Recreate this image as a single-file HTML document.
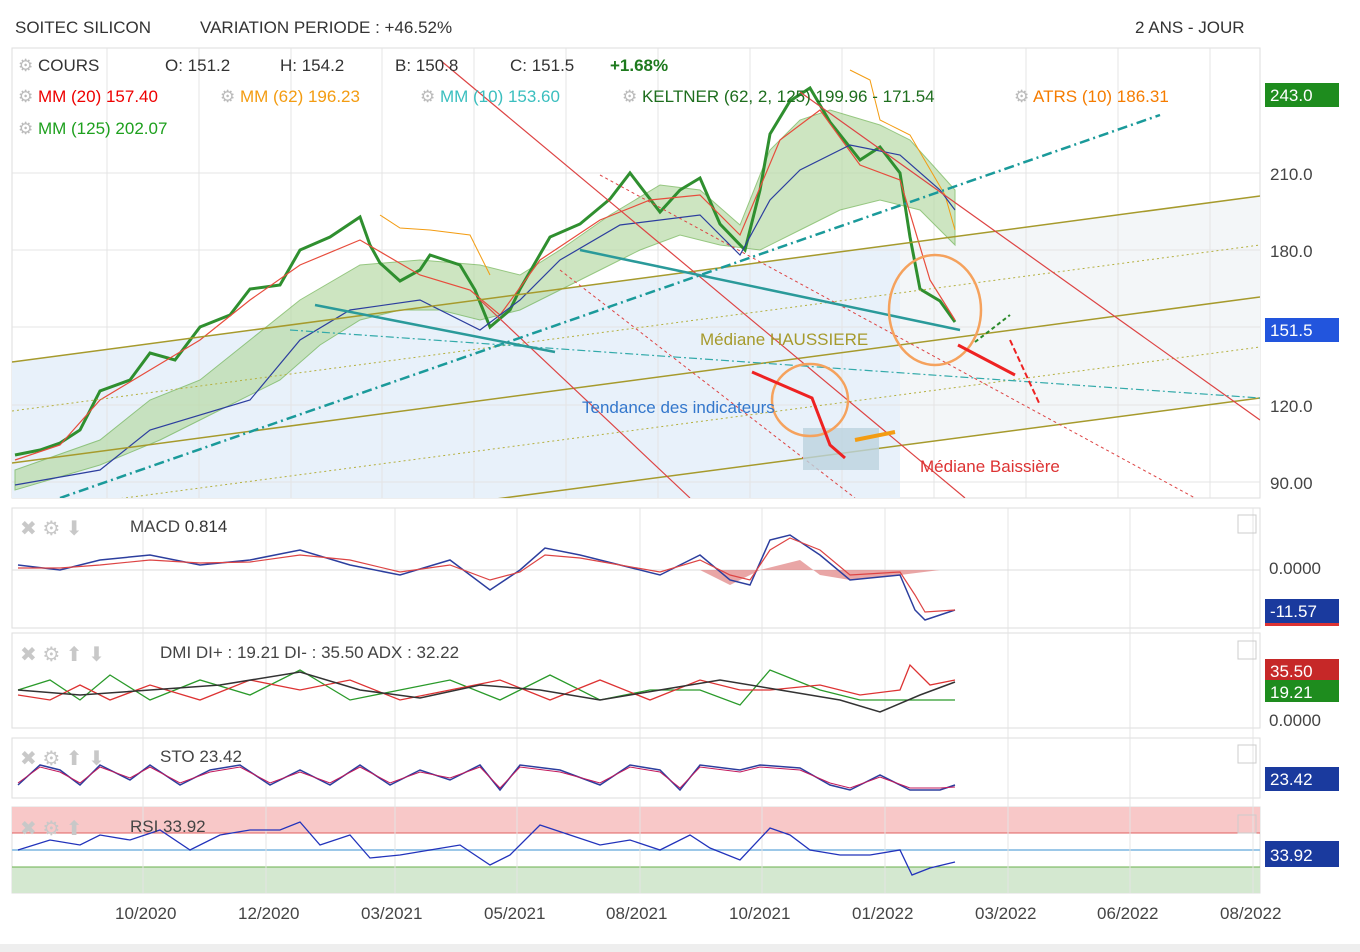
<!DOCTYPE html>
<html><head><meta charset="utf-8"><style>
body{margin:0;width:1360px;height:952px;background:#fff;font-family:"Liberation Sans",sans-serif;overflow:hidden;position:relative}
.t{position:absolute;font-size:17px;white-space:nowrap}
.g{color:#bbb}
</style></head><body>
<div class="t" style="left:15px;top:18px;color:#333">SOITEC SILICON</div>
<div class="t" style="left:200px;top:18px;color:#333">VARIATION PERIODE : +46.52%</div>
<div class="t" style="left:1135px;top:18px;color:#333">2 ANS - JOUR</div>
<svg width="1360" height="952" style="position:absolute;left:0;top:0">
<defs><clipPath id="c"><rect x="12" y="48" width="1248" height="450"/></clipPath></defs>
<rect x="0" y="944" width="1360" height="8" fill="#eee"/>
<!-- main panel -->
<rect x="12" y="48" width="1248" height="450" fill="#fff" stroke="#ddd"/>
<g clip-path="url(#c)">
<polygon points="12,362 1260,196 1260,398 12,563" fill="#fdfde8"/>
<polygon points="12,362 900,243 900,498 12,498" fill="#e8f1fa"/>
<polygon points="900,243 1260,196 1260,398 900,446" fill="#f3f6f8"/>
<g stroke="#e4e4e4"><line x1="107" y1="48" x2="107" y2="498"/><line x1="199" y1="48" x2="199" y2="498"/><line x1="291" y1="48" x2="291" y2="498"/><line x1="382" y1="48" x2="382" y2="498"/><line x1="474" y1="48" x2="474" y2="498"/><line x1="566" y1="48" x2="566" y2="498"/><line x1="658" y1="48" x2="658" y2="498"/><line x1="750" y1="48" x2="750" y2="498"/><line x1="842" y1="48" x2="842" y2="498"/><line x1="934" y1="48" x2="934" y2="498"/><line x1="1026" y1="48" x2="1026" y2="498"/><line x1="1118" y1="48" x2="1118" y2="498"/><line x1="1210" y1="48" x2="1210" y2="498"/>
<line x1="12" y1="173" x2="1260" y2="173"/><line x1="12" y1="250" x2="1260" y2="250"/><line x1="12" y1="327" x2="1260" y2="327"/><line x1="12" y1="405" x2="1260" y2="405"/><line x1="12" y1="482" x2="1260" y2="482"/></g>
<!-- keltner band -->
<polygon points="15,470 100,440 150,400 200,380 250,340 300,300 360,265 420,260 480,265 520,275 560,250 610,215 660,185 700,190 740,225 770,150 800,120 830,110 880,125 910,140 955,190 955,245 920,210 880,200 840,210 800,230 760,250 720,245 680,235 640,250 600,270 560,290 520,310 480,320 440,310 400,310 360,320 320,345 280,380 220,410 160,440 100,465 15,490" fill="#b9dba7" opacity=".7" stroke="#6ab04c"/>
<polyline points="380,215 400,228 430,230 470,235 490,275" fill="none" stroke="#f39c12"/>
<polyline points="850,70 870,80 880,120 910,135 945,195 955,230" fill="none" stroke="#f39c12"/>
<!-- price -->
<polyline points="15,455 40,450 60,443 80,430 100,391 130,380 150,353 175,360 200,327 230,315 250,289 280,285 300,250 330,237 360,217 370,245 380,263 400,281 420,270 430,255 460,265 475,290 490,327 510,310 520,289 550,237 580,224 610,199 630,173 660,212 680,190 700,178 720,224 745,250 760,190 770,134 790,101 810,88 830,122 860,160 880,147 900,173 910,237 920,289 940,301 955,322" fill="none" stroke="#2f8f2f" stroke-width="3"/>
<polyline points="15,460 60,445 100,400 150,370 200,340 250,300 300,265 360,240 420,275 470,290 500,315 540,260 600,220 650,200 700,195 740,235 780,140 820,110 860,165 900,180 930,280 955,320" fill="none" stroke="#e74c3c" stroke-width="1.2"/>
<polyline points="15,485 100,470 150,430 250,400 300,340 350,310 420,300 480,330 520,300 560,260 620,225 700,215 740,255 770,200 800,170 850,145 900,155 940,190 955,210" fill="none" stroke="#2c3e9e" stroke-width="1.2"/>
<!-- channels -->
<g stroke="#a69a2c" stroke-width="1.5"><line x1="12" y1="362" x2="1260" y2="196"/><line x1="12" y1="463" x2="1260" y2="297"/><line x1="12" y1="563" x2="1260" y2="398"/></g>
<g stroke="#b5b040" stroke-dasharray="2,3"><line x1="12" y1="411" x2="1260" y2="245"/><line x1="12" y1="513" x2="1260" y2="347"/></g>
<g stroke="#d44" stroke-width="1.2"><line x1="440" y1="60" x2="965" y2="498"/><line x1="800" y1="92" x2="1260" y2="420"/><line x1="480" y1="300" x2="690" y2="498"/></g>
<g stroke="#d44" stroke-dasharray="3,3"><line x1="600" y1="175" x2="1195" y2="498"/><line x1="560" y1="270" x2="855" y2="498"/></g>
<line x1="60" y1="498" x2="1160" y2="115" stroke="#1a9a9a" stroke-width="2.5" stroke-dasharray="10,4,2,4"/>
<line x1="290" y1="330" x2="1260" y2="398" stroke="#3aa" stroke-width="1.2" stroke-dasharray="8,3,2,3"/>
<g stroke="#2a9a9a" stroke-width="2.5"><line x1="315" y1="305" x2="555" y2="352"/><line x1="580" y1="250" x2="960" y2="330"/></g>
<rect x="803" y="428" width="76" height="42" fill="#bcd3df" opacity=".8"/>
<ellipse cx="935" cy="310" rx="46" ry="55" fill="none" stroke="#f5a25d" stroke-width="2.5"/>
<ellipse cx="810" cy="400" rx="38" ry="36" fill="none" stroke="#f5a25d" stroke-width="2.5"/>
<g stroke="#e22" stroke-width="3" fill="none"><path d="M752 372 L812 398 L830 445 L845 458"/><path d="M958 345 L1015 375"/></g>
<path d="M1010 340 L1040 405" stroke="#e22" stroke-width="2" stroke-dasharray="6,3"/>
<path d="M975 342 L1010 315" stroke="#2a8a2a" stroke-width="2" stroke-dasharray="4,3"/>
<path d="M855 440 L895 432" stroke="#f39c12" stroke-width="4"/>
</g>
<text x="700" y="345" fill="#a69a2c" font-size="17" font-family="Liberation Sans">Médiane HAUSSIERE</text>
<text x="582" y="413" fill="#3377cc" font-size="17" font-family="Liberation Sans">Tendance des indicateurs</text>
<text x="920" y="472" fill="#d33" font-size="17" font-family="Liberation Sans">Médiane Baissière</text>
<!-- right axis -->
<g font-family="Liberation Sans" font-size="17" fill="#444">
<rect x="1265" y="83" width="74" height="24" fill="#1e8c1e"/><text x="1270" y="101" fill="#fff">243.0</text>
<text x="1270" y="180">210.0</text><text x="1270" y="257">180.0</text>
<rect x="1265" y="318" width="74" height="24" fill="#2255dd"/><text x="1270" y="336" fill="#fff">151.5</text>
<text x="1270" y="412">120.0</text><text x="1270" y="489">90.00</text>
</g>
<!-- sub panels -->
<g fill="#fff" stroke="#ddd"><rect x="12" y="508" width="1248" height="120"/><rect x="12" y="633" width="1248" height="95"/><rect x="12" y="738" width="1248" height="60"/><rect x="12" y="807" width="1248" height="86"/></g>
<rect x="12" y="807" width="1248" height="26" fill="#f8c8c8"/>
<rect x="12" y="867" width="1248" height="26" fill="#d4e8d0"/>
<line x1="12" y1="833" x2="1260" y2="833" stroke="#e06060"/>
<line x1="12" y1="850" x2="1260" y2="850" stroke="#9cc8e8" stroke-width="2"/>
<line x1="12" y1="867" x2="1260" y2="867" stroke="#6ab04c"/>
<g stroke="#e4e4e4"><line x1="143" y1="508" x2="143" y2="893"/><line x1="266" y1="508" x2="266" y2="893"/><line x1="395" y1="508" x2="395" y2="893"/><line x1="517" y1="508" x2="517" y2="893"/><line x1="640" y1="508" x2="640" y2="893"/><line x1="762" y1="508" x2="762" y2="893"/><line x1="885" y1="508" x2="885" y2="893"/><line x1="1008" y1="508" x2="1008" y2="893"/><line x1="1130" y1="508" x2="1130" y2="893"/><line x1="1253" y1="508" x2="1253" y2="893"/></g>
<line x1="12" y1="570" x2="1260" y2="570" stroke="#ddd"/>
<!-- macd -->
<polygon points="700,570 730,585 760,570 800,560 820,575 850,580 900,575 940,570" fill="#e08080" opacity=".7"/>
<polyline points="18,565 60,570 100,560 150,555 200,565 250,560 300,550 350,565 400,575 450,560 490,590 520,570 545,548 580,555 620,565 660,575 700,555 730,580 750,585 770,540 790,535 820,555 850,580 900,575 915,610 925,620 955,610" fill="none" stroke="#2c3e9e" stroke-width="1.5"/>
<polyline points="18,568 60,568 100,565 150,560 200,563 250,562 300,555 350,560 400,572 450,565 490,580 520,572 545,555 580,558 620,565 660,572 700,560 730,575 750,580 770,550 790,538 820,550 850,575 900,572 915,595 925,612 955,610" fill="none" stroke="#d44" stroke-width="1.2"/>
<!-- dmi -->
<polyline points="18,690 50,680 80,700 110,675 150,700 200,680 250,695 300,670 350,700 400,690 450,680 500,700 550,675 600,700 650,690 700,690 740,705 770,670 820,690 860,700 900,700 920,700 955,700" fill="none" stroke="#2a9a2a" stroke-width="1.3"/>
<polyline points="18,695 50,700 80,685 110,700 150,685 200,700 250,680 300,690 350,680 400,700 450,690 500,680 550,700 600,680 650,700 700,680 740,690 770,690 820,685 860,695 900,690 910,665 930,685 955,680" fill="none" stroke="#d33" stroke-width="1.3"/>
<polyline points="18,690 80,695 150,690 220,685 300,672 360,690 420,698 480,685 540,690 600,700 660,690 720,680 780,690 840,700 880,712 920,695 955,682" fill="none" stroke="#333" stroke-width="1.5"/>
<!-- sto -->
<polyline points="18,785 40,765 60,770 80,785 100,765 130,780 150,765 180,785 210,770 240,765 270,785 300,770 330,785 360,765 390,785 420,770 450,780 480,765 500,790 520,765 560,770 600,785 630,765 660,770 680,790 700,765 740,770 760,765 800,768 830,785 850,790 880,775 910,790 940,790 955,785" fill="none" stroke="#2c3e9e" stroke-width="1.5"/>
<polyline points="18,783 40,767 60,772 80,783 100,767 130,778 150,767 180,783 210,772 240,767 270,783 300,772 330,783 360,767 390,783 420,772 450,778 480,767 500,788 520,767 560,772 600,783 630,767 660,772 680,788 700,767 740,772 760,767 800,770 830,783 850,788 880,777 910,788 940,788 955,787" fill="none" stroke="#c2185b" stroke-width="1"/>
<!-- rsi -->
<polyline points="18,850 50,840 80,845 100,835 130,840 160,830 190,850 220,835 250,830 280,830 300,822 320,845 350,835 370,858 400,855 430,850 460,845 490,865 510,855 540,825 570,835 600,845 630,840 660,850 690,835 710,848 740,860 770,828 790,835 810,850 840,855 870,855 900,850 912,875 930,868 955,862" fill="none" stroke="#2233bb" stroke-width="1.3"/>
<g fill="#ccc"><rect x="1238" y="515" width="18" height="18" fill="none" stroke="#ccc"/><rect x="1238" y="641" width="18" height="18" fill="none" stroke="#ccc"/><rect x="1238" y="745" width="18" height="18" fill="none" stroke="#ccc"/><rect x="1238" y="815" width="18" height="18" fill="none" stroke="#ccc"/></g>
<g font-family="Liberation Sans" font-size="17" fill="#444">
<text x="1269" y="574">0.0000</text>
<rect x="1265" y="599" width="74" height="26" fill="#1a3a9e"/><rect x="1265" y="623" width="74" height="3" fill="#d33"/><text x="1270" y="617" fill="#fff">-11.57</text>
<rect x="1265" y="659" width="74" height="22" fill="#c62828"/><text x="1270" y="677" fill="#fff">35.50</text>
<rect x="1265" y="680" width="74" height="22" fill="#1e8c1e"/><text x="1270" y="698" fill="#fff">19.21</text>
<text x="1269" y="726">0.0000</text>
<rect x="1265" y="767" width="74" height="24" fill="#1a3a9e"/><text x="1270" y="785" fill="#fff">23.42</text>
<rect x="1265" y="841" width="74" height="26" fill="#1a3a9e"/><text x="1270" y="861" fill="#fff">33.92</text>
<g fill="#444"><text x="115" y="919">10/2020</text><text x="238" y="919">12/2020</text><text x="361" y="919">03/2021</text><text x="484" y="919">05/2021</text><text x="606" y="919">08/2021</text><text x="729" y="919">10/2021</text><text x="852" y="919">01/2022</text><text x="975" y="919">03/2022</text><text x="1097" y="919">06/2022</text><text x="1220" y="919">08/2022</text></g>
</g>
<!-- panel icons -->
<g font-family="Liberation Sans" font-size="20" fill="#c8c8c8">
<text x="20" y="535">✖ ⚙ ⬇</text><text x="20" y="661">✖ ⚙ ⬆ ⬇</text><text x="20" y="765">✖ ⚙ ⬆ ⬇</text><text x="20" y="835">✖ ⚙ ⬆</text></g>
<g font-family="Liberation Sans" font-size="17" fill="#444">
<text x="130" y="532">MACD <tspan fill="#333">0.814</tspan></text>
<text x="160" y="658">DMI  DI+ : 19.21 DI- : 35.50 ADX : 32.22</text>
<text x="160" y="762">STO  23.42</text>
<text x="130" y="832">RSI  33.92</text></g>
</svg>
<div class="t" style="left:18px;top:56px"><span class="g">⚙</span> <span style="color:#333">COURS</span></div>
<div class="t" style="left:165px;top:56px;color:#333">O: 151.2</div>
<div class="t" style="left:280px;top:56px;color:#333">H: 154.2</div>
<div class="t" style="left:395px;top:56px;color:#333">B: 150.8</div>
<div class="t" style="left:510px;top:56px;color:#333">C: 151.5</div>
<div class="t" style="left:610px;top:56px;color:#1e7a1e;font-weight:bold">+1.68%</div>
<div class="t" style="left:18px;top:87px;color:#e00"><span class="g">⚙</span> MM (20) 157.40</div>
<div class="t" style="left:220px;top:87px;color:#f39c12"><span class="g">⚙</span> MM (62) 196.23</div>
<div class="t" style="left:420px;top:87px;color:#3bbfbf"><span class="g">⚙</span> MM (10) 153.60</div>
<div class="t" style="left:622px;top:87px;color:#1e6e1e"><span class="g">⚙</span> KELTNER (62, 2, 125) 199.96 - 171.54</div>
<div class="t" style="left:1014px;top:87px;color:#f57c00"><span class="g">⚙</span> ATRS (10) 186.31</div>
<div class="t" style="left:18px;top:119px;color:#1ea01e"><span class="g">⚙</span> MM (125) 202.07</div>
</body></html>
